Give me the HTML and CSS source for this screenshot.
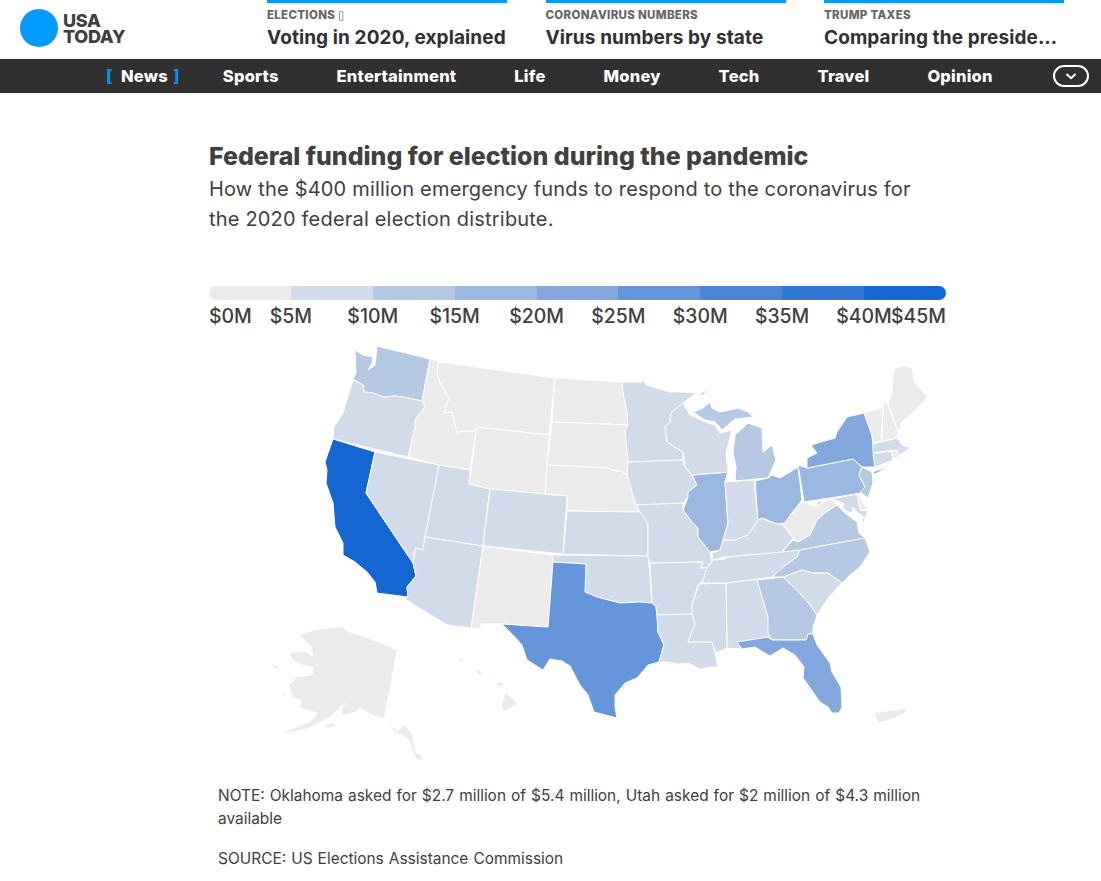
FILE: index.html
```html
<!DOCTYPE html>
<html lang="en">
<head>
<meta charset="utf-8">
<title>Federal funding for election during the pandemic</title>
<link rel="stylesheet" href="styles.css">
</head>
<body>
<header class="top">
  <a class="logo"><span class="logo-dot"></span><span class="logo-text">USA<br>TODAY</span></a>
  <div class="tabs">
    <a class="tab"><span class="tab-label">ELECTIONS <span class="tofu">▯</span></span><span class="tab-title">Voting in 2020, explained</span></a>
    <a class="tab"><span class="tab-label">CORONAVIRUS NUMBERS</span><span class="tab-title">Virus numbers by state</span></a>
    <a class="tab"><span class="tab-label">TRUMP TAXES</span><span class="tab-title">Comparing the presidents' taxes</span></a>
  </div>
</header>
<nav class="nav">
  <a class="nav-item active">News</a>
  <a class="nav-item">Sports</a>
  <a class="nav-item">Entertainment</a>
  <a class="nav-item">Life</a>
  <a class="nav-item">Money</a>
  <a class="nav-item">Tech</a>
  <a class="nav-item">Travel</a>
  <a class="nav-item">Opinion</a>
  <button class="more" aria-label="More"><svg width="12" height="7" viewBox="0 0 12 7"><path class="chev" d="M1.5 1 6 5.2 10.500 1"/></svg></button>
</nav>
<main class="chart">
  <h1 class="title">Federal funding for election during the pandemic</h1>
  <p class="sub">How the $400 million emergency funds to respond to the coronavirus for the 2020 federal election distribute.</p>
  <div class="bar">
    <span class="c0"></span><span class="c1"></span><span class="c2"></span><span class="c3"></span><span class="c4"></span><span class="c5"></span><span class="c6"></span><span class="c7"></span><span class="c8"></span>
  </div>
  <div class="ticks">
    <span class="tick"><b>$0M</b></span><span class="tick"><b>$5M</b></span><span class="tick"><b>$10M</b></span><span class="tick"><b>$15M</b></span><span class="tick"><b>$20M</b></span><span class="tick"><b>$25M</b></span><span class="tick"><b>$30M</b></span><span class="tick"><b>$35M</b></span><span class="tick"><b>$40M</b></span><span class="tick"><b>$45M</b></span>
  </div>
  <svg class="map" viewBox="209 340 737 430" width="737" height="430">
    <g class="states">
      <polygon class="c2" points="377,346 430,359 422,401 403,397 395,396 383,397 373,393 364,392 363,385 353,379 356,373 355,350 363,355 373,357 372,363 368,370 375,365"/>
      <polygon class="c1" points="353,380 363,385 364,392 373,393 383,397 395,396 403,397 422,401 425,407 415,420 415,427 408,457 333,439 334,427 343,413"/>
      <polygon class="c8" points="333,439 375,452 366,493 413,563 416,576 407,587 408,597 377,593 375,582 367,572 355,562 343,555 343,543 335,527 333,503 326,483 327,470 325,462"/>
      <polygon class="c1" points="375,452 439,465 425,538 423,550 415,548 413,563 366,493"/>
      <polygon class="c0" points="430,359 439,361 437,373 440,383 449,398 444,413 452,412 457,432 467,431 474,431 477,427 470,470 439,465 408,457 415,427 415,420 425,407 422,401"/>
      <polygon class="c0" points="439,362 555,378 549,435 477,427 474,431 467,431 457,432 452,412 444,413 449,398 440,383 437,373"/>
      <polygon class="c0" points="477,427 549,435 545,494 490,489 469,484"/>
      <polygon class="c1" points="439,465 470,470 469,484 490,489 483,546 425,537"/>
      <polygon class="c1" points="490,489 567,496 563,554 483,546"/>
      <polygon class="c1" points="425,537 483,546 471,628 447,625 405,599 408,597 407,587 416,576 413,563 415,548 423,550"/>
      <polygon class="c0" points="483,546 552,555 553,562 548,627 502,624 481,624 481,629 471,628"/>
      <polygon class="c0" points="555,378 622,382 623,393 627,412 628,425 552,422"/>
      <polygon class="c0" points="552,422 628,425 625,430 628,462 627,475 622,472 612,470 607,468 547,465"/>
      <polygon class="c0" points="547,465 607,468 612,470 622,472 627,475 635,500 639,512 567,511 567,496 545,494"/>
      <polygon class="c1" points="567,511 640,512 646,520 648,525 648,556 563,554"/>
      <polygon class="c1" points="552,555 648,556 649,563 651,590 652,603 640,602 620,603 597,597 585,592 586,564 553,562"/>
      <polygon class="c5" points="553,562 586,564 585,592 597,597 620,603 640,602 652,603 656,607 657,615 658,632 664,645 659,662 648,665 637,678 625,683 615,695 615,707 617,718 594,712 588,695 580,685 570,666 562,661 550,659 543,670 527,660 522,645 513,635 502,624 548,627"/>
      <polygon class="c1" points="622,382 642,382 642,377 646,385 670,392 680,392 696,393 683,403 671,413 670,422 665,427 667,442 683,452 683,460 628,462 625,430 628,425 627,412 623,393"/>
      <polygon class="c1" points="628,462 683,460 685,467 692,475 697,485 688,492 688,497 683,503 636,505 627,475"/>
      <polygon class="c1" points="636,505 683,503 683,510 692,522 698,528 698,537 710,552 712,560 707,568 700,568 703,562 650,563 649,563 648,556 648,525 646,520 640,512"/>
      <polygon class="c1" points="650,563 703,562 700,568 707,568 703,580 698,585 692,605 693,614 657,615 656,607 652,603"/>
      <polygon class="c1" points="657,615 692,614 695,624 688,642 712,642 716,657 718,667 710,667 700,669 688,663 678,664 668,662 659,662 664,645 658,632"/>
      <polygon class="c1" points="699,584 726,583 727,633 727,648 716,653 712,642 688,642 695,624 692,614 692,605"/>
      <polygon class="c1" points="726,583 757,579 768,617 770,640 738,642 741,649 727,648 727,633"/>
      <polygon class="c1" points="702,583 707,568 713,560 725,559 727,557 800,550 797,557 783,567 773,577 757,579 726,583"/>
      <polygon class="c1" points="713,560 712,553 720,550 723,540 735,540 748,535 758,520 762,518 770,522 783,524 793,538 782,552 725,557"/>
      <polygon class="c3" points="692,475 728,472 725,482 728,523 724,537 720,550 710,552 698,537 698,528 692,522 683,510 688,497 688,492 697,485"/>
      <polygon class="c1" points="725,482 754,480 758,520 748,535 735,540 723,540 728,523"/>
      <polygon class="c1" points="683,403 690,415 705,422 715,425 720,433 732,430 726,453 728,472 692,475 685,467 683,452 667,442 665,427 670,422 671,413"/>
      <polygon class="c2" points="693,412 703,408 710,402 712,408 720,412 738,408 748,412 753,417 735,419 722,430 715,422 705,420"/>
      <polygon class="c2" points="735,435 748,423 762,428 763,452 772,445 776,460 768,478 735,481 736,467 733,453"/>
      <polygon class="c2" points="700,394 708,389 702,396"/>
      <polygon class="c3" points="755,481 768,478 772,475 780,478 798,467 802,500 792,513 787,523 777,524 762,518 758,520"/>
      <polygon class="c0" points="802,502 817,507 828,498 833,500 837,505 825,513 817,520 810,535 798,542 793,538 783,525 792,513"/>
      <polygon class="c3" points="798,465 807,468 853,459 862,467 859,475 865,487 862,493 804,502"/>
      <polygon class="c4" points="807,468 807,458 817,453 811,445 835,438 837,432 847,417 864,413 872,435 875,467 862,467 853,459"/>
      <polygon class="c4" points="873,472 892,465 875,474"/>
      <polygon class="c2" points="862,467 872,472 873,483 868,498 860,492 865,487 859,475"/>
      <polygon class="c0" points="857,493 868,510 860,510"/>
      <polygon class="c1" points="817,502 857,494 860,510 868,511 865,518 858,513 853,507 852,513 843,510 843,503 833,500 828,498 817,507"/>
      <polygon class="c2" points="782,552 793,540 798,542 810,535 817,520 825,513 837,505 845,513 857,522 859,533 865,538 800,550"/>
      <polygon class="c4" points="863,518 865,518 862,527"/>
      <polygon class="c2" points="800,550 865,538 870,552 860,567 850,575 842,583 828,573 812,573 802,570 783,577 772,577 783,567 797,557"/>
      <polygon class="c1" points="783,577 802,570 812,573 828,573 842,583 828,598 817,615 810,605 797,590 788,582"/>
      <polygon class="c2" points="757,580 783,577 788,582 797,590 810,605 817,615 813,627 813,634 808,634 806,640 772,640 768,633 768,617"/>
      <polygon class="c4" points="737,642 768,637 772,640 806,640 808,634 813,634 817,645 830,663 832,672 841,687 842,707 839,713 832,713 828,707 820,702 803,678 804,667 795,655 783,648 770,656 755,647 742,649"/>
      <polygon class="c0" points="895,368 905,366 912,368 915,383 928,397 913,412 902,422 898,432 888,403 892,393 893,377"/>
      <polygon class="c0" points="883,403 887,403 898,432 897,438 882,441"/>
      <polygon class="c0" points="864,413 883,408 881,441 873,443 872,435"/>
      <polygon class="c1" points="873,444 897,438 902,445 910,448 900,455 895,450 873,453"/>
      <polygon class="c1" points="873,454 891,451 893,460 875,467"/>
      <polygon class="c0" points="892,451 897,450 900,456 893,459"/>
    </g>
    <g class="c0">
      <polygon points="300,635 315,630 342,627 348,632 367,638 397,650 384,717 397,732 405,725 412,735 415,752 422,757 421,761 415,757 410,740 403,735 395,732 385,718 372,715 360,707 355,712 342,715 342,708 348,702 340,707 332,715 318,723 308,728 300,730 280,734 295,728 310,722 318,713 308,710 300,707 302,700 293,697 289,685 297,677 313,675 313,667 303,665 293,660 290,653 305,652 313,657 312,648"/>
      <polygon points="326,725 334,723 334,726 327,728"/>
      <polygon points="282,693 286,695 284,696"/>
      <polygon points="271,664 277,666 279,669 275,668"/>
      <polygon points="459,659 463,659 462,662"/>
      <polygon points="477,670 480,671 482,675 478,674"/>
      <polygon points="488,677 493,678 489,678"/>
      <polygon points="497,682 502,683 502,686 498,686"/>
      <polygon points="506,693 517,703 505,711 502,708 503,700"/>
      <polygon points="875,713 905,709 905,713 893,718 878,723"/>
    </g>
  </svg>
  <p class="note">NOTE: Oklahoma asked for $2.7 million of $5.4 million, Utah asked for $2 million of $4.3 million available</p>
  <p class="note source">SOURCE: US Elections Assistance Commission</p>
</main>
</body>
</html>
```
FILE: styles.css
```css
* { box-sizing: border-box; }
html, body { margin: 0; background: #fff; }
body { font-family: Inter, "Liberation Sans", sans-serif; color: #404040; }
a { text-decoration: none; color: inherit; }

.top { display: flex; height: 59px; padding-left: 20px; }
.logo { display: flex; align-items: center; gap: 5px; width: 247px; height: 56px; }
.logo-dot { width: 38px; height: 38px; border-radius: 50%; background: #009bff; }
.logo-text { padding-top: 2px; font-size: 18px; font-weight: 800; line-height: 16px; color: #404040; letter-spacing: -.3px; }
.tabs { display: flex; gap: 38.500px; }
.tab { display: flex; flex-direction: column; width: 240px; border-top: 3px solid #009bff; }
.tab-label { margin-top: 6px; font-size: 11.500px; line-height: 13px; font-weight: 800; letter-spacing: .3px; color: #666; white-space: nowrap; }
.tab-title { margin-top: 3px; font-size: 19px; line-height: 26px; font-weight: 700; letter-spacing: .1px; color: #303030; white-space: nowrap; overflow: hidden; text-overflow: ellipsis; }
.tofu { font-family: "DejaVu Sans", sans-serif; font-weight: 400; }

.nav { display: flex; align-items: center; gap: 58px; height: 34px; padding-left: 121px; background: #303030; position: relative; }
.nav-item { position: relative; font-size: 16.500px; font-weight: 800; letter-spacing: .2px; color: #fff; line-height: 34px; }
.active { margin-right: -3px; }
.active::before, .active::after { position: absolute; top: 0; color: #0d8fef; }
.active::before { content: "["; left: -15px; }
.active::after { content: "]"; right: -12px; }
.more { position: absolute; right: 12px; top: 6px; display: flex; align-items: center; justify-content: center; width: 36px; height: 22px; padding: 0; background: transparent; border: 2px solid #fff; border-radius: 11px; }
.chev { fill: none; stroke: #fff; stroke-width: 2; }

.chart { width: 737px; margin-left: 209px; }
.title { margin: 48px 0 0; font-size: 24.900px; line-height: 30px; font-weight: 800; color: #404040; }
.sub { margin: 3px 0 0; font-size: 20px; line-height: 30px; letter-spacing: .19px; color: #404040; }
.bar { display: flex; height: 14px; margin-top: 52px; border-radius: 7px; overflow: hidden; }
.bar span { flex: 1; }
.ticks { display: flex; justify-content: space-between; height: 30px; padding-top: 1px; }
.tick { display: flex; justify-content: center; width: 0; white-space: nowrap; font-size: 19.400px; line-height: 30px; }
.tick:first-child { justify-content: flex-start; }
.tick:last-child { justify-content: flex-end; }
.tick b { font-weight: 500; }

.map { display: block; margin-top: 10px; }
.states { stroke: #fff; stroke-width: 1; stroke-linejoin: round; }
.c0 { background: #ebebeb; fill: #ebebeb; }
.c1 { background: #d1dbea; fill: #d1dbea; }
.c2 { background: #b5c9e3; fill: #b5c9e3; }
.c3 { background: #9cb8e0; fill: #9cb8e0; }
.c4 { background: #81a7dc; fill: #81a7dc; }
.c5 { background: #6696da; fill: #6696da; }
.c6 { background: #4b85d7; fill: #4b85d7; }
.c7 { background: #3175d5; fill: #3175d5; }
.c8 { background: #1666d2; fill: #1666d2; }

.note { margin: 14px 0 0; padding: 0 9px; font-size: 15.450px; line-height: 23px; word-spacing: .7px; color: #404040; }
.source { margin-top: 17px; }
```
